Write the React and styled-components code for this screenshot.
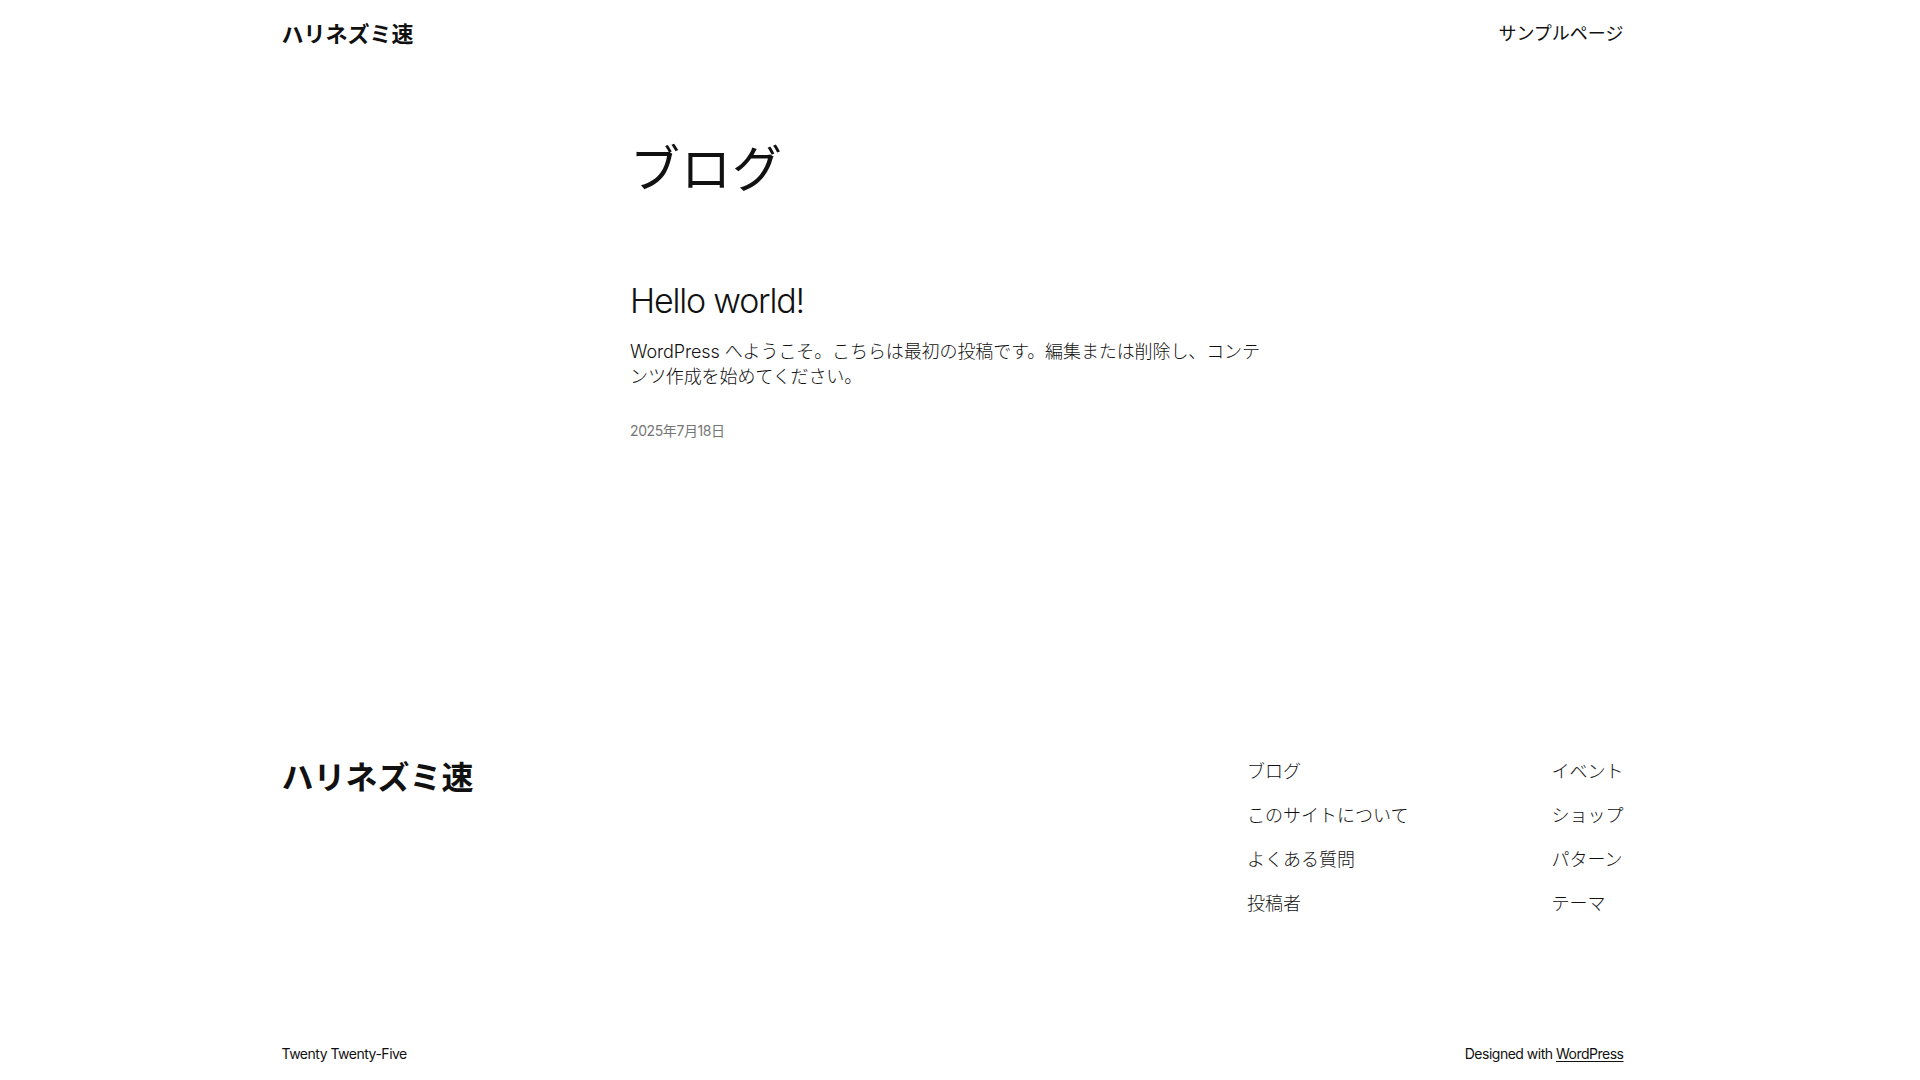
import styled, { createGlobalStyle } from "styled-components";

const GlobalStyle = createGlobalStyle`
  html, body {
    margin: 0;
    padding: 0;
    background: #fff;
    color: #111111;
    font-family: Inter, "Noto Sans CJK JP", sans-serif;
  }
  * {
    box-sizing: border-box;
  }
`;

const footerNav = [
  ["ブログ", "このサイトについて", "よくある質問", "投稿者"],
  ["イベント", "ショップ", "パターン", "テーマ"],
];

const App = () => {
  return (
    <Page>
      <GlobalStyle />
      <Header>
        <SiteTitle href="#">ハリネズミ速</SiteTitle>
        <NavLink href="#">サンプルページ</NavLink>
      </Header>

      <Main>
        <PageTitle>ブログ</PageTitle>
        <Post>
          <PostTitle>Hello world!</PostTitle>
          <Excerpt>
            WordPress へようこそ。こちらは最初の投稿です。編集または削除し、コンテンツ作成を始めてください。
          </Excerpt>
          <PostDate>2025年7月18日</PostDate>
        </Post>
      </Main>

      <Footer>
        <FooterTop>
          <FooterTitle href="#">ハリネズミ速</FooterTitle>
          <FooterNav>
            {footerNav.map((col, i) => (
              <FooterColumn key={i}>
                {col.map((item) => (
                  <FooterLink key={item} href="#">
                    {item}
                  </FooterLink>
                ))}
              </FooterColumn>
            ))}
          </FooterNav>
        </FooterTop>
        <FooterBottom>
          <Small>Twenty Twenty-Five</Small>
          <Small>
            Designed with <SmallLink href="#">WordPress</SmallLink>
          </Small>
        </FooterBottom>
      </Footer>
    </Page>
  );
};

// leave room for the browser scrollbar the page had
const Page = styled.div`
  min-height: 100vh;
  padding-right: 15px;
`;

const Wrap = styled.div`
  max-width: 1342px;
  margin: 0 auto;
`;

const Header = styled(Wrap).attrs({ as: "header" })`
  display: flex;
  align-items: center;
  justify-content: space-between;
  padding: 20px 0;
`;

const SiteTitle = styled.a`
  font-size: 22px;
  line-height: 28px;
  font-weight: 700;
  color: #111111;
  text-decoration: none;
`;

const NavLink = styled.a`
  font-size: 18px;
  line-height: 28px;
  font-weight: 400;
  color: #111111;
  text-decoration: none;
`;

const Main = styled.main`
  width: 645px;
  margin: 0 auto;
  padding-top: 71px;
`;

const PageTitle = styled.h1`
  margin: 0;
  font-size: 50px;
  line-height: 60px;
  font-weight: 400;
  letter-spacing: 1px;
`;

const Post = styled.article`
  margin-top: 81px;
  display: flex;
  flex-direction: column;
`;

const PostTitle = styled.h2`
  margin: 0;
  font-size: 34px;
  line-height: 41px;
  font-weight: 300;
  letter-spacing: -1.2px;
`;

const Excerpt = styled.p`
  margin: 18px 0 0;
  font-size: 18px;
  line-height: 25px;
  font-weight: 300;
  letter-spacing: -0.1px;
`;

const PostDate = styled.time`
  margin-top: 32px;
  font-size: 14px;
  line-height: 20px;
  color: #767676;
  letter-spacing: -0.4px;
`;

const Footer = styled(Wrap).attrs({ as: "footer" })`
  padding-top: 317px;
  padding-bottom: 60px;
`;

const FooterTop = styled.div`
  display: flex;
  justify-content: space-between;
  align-items: flex-start;
`;

const FooterTitle = styled.a`
  font-size: 32px;
  line-height: 40px;
  font-weight: 700;
  color: #111111;
  text-decoration: none;
`;

const FooterNav = styled.nav`
  display: flex;
  gap: 143px;
  padding-top: 1px;
`;

const FooterColumn = styled.div`
  display: flex;
  flex-direction: column;
  gap: 19px;
`;

const FooterLink = styled.a`
  font-size: 18px;
  line-height: 25px;
  font-weight: 300;
  color: #111111;
  text-decoration: none;
`;

const FooterBottom = styled.div`
  display: flex;
  justify-content: space-between;
  align-items: center;
  margin-top: 128px;
`;

const Small = styled.span`
  font-size: 14px;
  line-height: 20px;
  font-weight: 400;
  letter-spacing: -0.5px;
  color: #111111;
`;

const SmallLink = styled.a`
  color: #111111;
  text-decoration: underline;
  text-underline-offset: 2px;
`;

export default App;
